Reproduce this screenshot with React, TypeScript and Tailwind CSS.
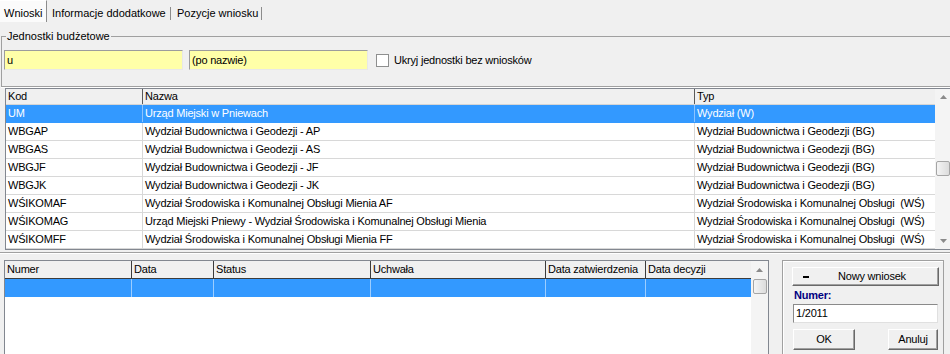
import React from "react";

const topRows: [string, string, string][] = [
  ["UM", "Urząd Miejski w Pniewach", "Wydział (W)"],
  ["WBGAP", "Wydział Budownictwa i Geodezji - AP", "Wydział Budownictwa i Geodezji (BG)"],
  ["WBGAS", "Wydział Budownictwa i Geodezji - AS", "Wydział Budownictwa i Geodezji (BG)"],
  ["WBGJF", "Wydział Budownictwa i Geodezji - JF", "Wydział Budownictwa i Geodezji (BG)"],
  ["WBGJK", "Wydział Budownictwa i Geodezji - JK", "Wydział Budownictwa i Geodezji (BG)"],
  ["WŚIKOMAF", "Wydział Środowiska i Komunalnej Obsługi Mienia AF", "Wydział Środowiska i Komunalnej Obsługi  (WŚ)"],
  ["WŚIKOMAG", "Urząd Miejski Pniewy - Wydział Środowiska i Komunalnej Obsługi Mienia", "Wydział Środowiska i Komunalnej Obsługi  (WŚ)"],
  ["WŚIKOMFF", "Wydział Środowiska i Komunalnej Obsługi Mienia FF", "Wydział Środowiska i Komunalnej Obsługi  (WŚ)"],
];

const topCols = ["w-[137px]", "w-[552px]", "w-[240px]"];
const bottomCols = [
  ["Numer", "w-[127px]"],
  ["Data", "w-[82px]"],
  ["Status", "w-[157px]"],
  ["Uchwała", "w-[175px]"],
  ["Data zatwierdzenia", "w-[100px]"],
  ["Data decyzji", "w-[105px]"],
];

function Arrow({ down }: { down?: boolean }) {
  return (
    <svg width="7" height="4" viewBox="0 0 7 4">
      {down ? (
        <path d="M0 0 H7 L3.5 4 Z" fill="#8a8a8a" />
      ) : (
        <path d="M0 4 H7 L3.5 0 Z" fill="#8a8a8a" />
      )}
    </svg>
  );
}

function Thumb({ w }: { w: string }) {
  return (
    <div
      className={`${w} h-[15px] rounded-[2px] border border-[#a5a5a5] bg-gradient-to-r from-[#f4f4f4] to-[#dcdcdc]`}
    />
  );
}

const btn =
  "bg-[#f0f0f0] border-t border-l border-white border-b border-r border-b-[#696969] border-r-[#696969] shadow-[inset_-1px_-1px_0_#a0a0a0] flex items-center";

export default function App() {
  return (
    <div className="w-[950px] h-[354px] overflow-hidden bg-[#f0f0f0] text-black text-[11px] leading-[13px] tracking-[-0.2px] font-['Liberation_Sans',Arial,sans-serif] flex flex-col">
      {/* Tabs */}
      <div className="h-[22px] shrink-0 flex items-stretch tracking-normal">
        <div className="w-[47px] pl-[4px] pt-[6px] bg-[#fbfbfb] border-r border-r-[#8c8c8c] border-t border-t-white">
          Wnioski
        </div>
        <div className="w-[124px] pl-[5px] pt-[7px] flex">
          <span className="flex-1">Informacje ddodatkowe</span>
          <span className="w-[1px] h-[13px] bg-[#8c8c8c]" />
        </div>
        <div className="w-[91px] pl-[6px] pt-[7px] flex">
          <span className="flex-1">Pozycje wniosku</span>
          <span className="w-[1px] h-[13px] bg-[#8c8c8c]" />
        </div>
      </div>

      {/* Group box */}
      <fieldset className="mt-[8px] ml-[1px] w-[990px] shrink-0 border-t border-l border-b border-[#a0a0a0] px-[2px] pb-[16px] shadow-[0_1px_0_#ffffff]">
        <legend className="ml-[2px] px-[1px] leading-[13px] tracking-normal">Jednostki budżetowe</legend>
        <div className="mt-[7px] flex items-center">
          <div className="w-[179px] h-[20px] bg-[#ffffa8] border-t border-l border-[#9c9c9c] border-b border-r border-b-[#e8e8e8] border-r-[#e8e8e8] pl-[2px] flex items-center">
            u
          </div>
          <div className="ml-[6px] w-[179px] h-[20px] bg-[#ffffa8] border-t border-l border-[#9c9c9c] border-b border-r border-b-[#e8e8e8] border-r-[#e8e8e8] pl-[2px] flex items-center">
            (po nazwie)
          </div>
          <div className="ml-[8px] w-[13px] h-[13px] bg-white border border-[#8e8f8f]" />
          <span className="ml-[5px]">Ukryj jednostki bez wniosków</span>
        </div>
      </fieldset>

      {/* Top grid */}
      <div className="mt-[1px] ml-[5px] w-[960px] h-[162px] shrink-0 border border-[#828790] bg-white flex">
        <div className="w-[929px] flex flex-col">
          <div className="h-[16px] flex bg-[#f0f0f0] border-b border-[#d5d5d5]">
            {["Kod", "Nazwa", "Typ"].map((h, i) => (
              <div
                key={h}
                className={`${topCols[i]} pl-[2px] flex items-center ${i < 2 ? "border-r border-[#5a5a5a]" : ""}`}
              >
                {h}
              </div>
            ))}
          </div>
          {topRows.map((r, ri) => {
            const sel = ri === 0;
            return (
              <div
                key={r[0]}
                className={`h-[18px] flex border-b ${sel ? "bg-[#3399ff] text-white border-[#3399ff]" : "border-[#d8d8d8]"}`}
              >
                {r.map((c, ci) => (
                  <div
                    key={ci}
                    className={`${topCols[ci]} pl-[2px] flex items-center whitespace-pre overflow-hidden ${ci < 2 ? (sel ? "border-r border-[#8cc4ff]" : "border-r border-[#d8d8d8]") : ""}`}
                  >
                    {c}
                  </div>
                ))}
              </div>
            );
          })}
        </div>
        <div className="w-[16px] bg-[#f4f4f4] flex flex-col items-center">
          <div className="h-[15px] flex items-center">
            <Arrow />
          </div>
          <div className="mt-[57px]">
            <Thumb w="w-[14px]" />
          </div>
          <div className="flex-1" />
          <div className="h-[16px] flex items-center">
            <Arrow down />
          </div>
        </div>
      </div>

      {/* Splitter */}
      <div className="mt-[2px] h-[1px] shrink-0 bg-[#a0a0a0] shadow-[0_1px_0_#ffffff]" />

      {/* Bottom section */}
      <div className="mt-[7px] flex items-start">
        <div className="ml-[4px] w-[765px] h-[110px] border border-[#828790] bg-white flex">
          <div className="w-[746px] flex flex-col">
            <div className="h-[18px] flex bg-[#f0f0f0] border-b border-[#3c3c3c]">
              {bottomCols.map(([h, w], i) => (
                <div
                  key={h}
                  className={`${w} pl-[2px] flex items-center ${i < bottomCols.length - 1 ? "border-r border-[#3c3c3c]" : ""}`}
                >
                  {h}
                </div>
              ))}
            </div>
            <div className="h-[18px] flex bg-[#3399ff]">
              {bottomCols.map(([h, w], i) => (
                <div
                  key={h}
                  className={`${w} ${i < bottomCols.length - 1 ? "border-r border-[#9ccdff]" : ""}`}
                />
              ))}
            </div>
          </div>
          <div className="w-[17px] bg-[#f4f4f4] flex flex-col items-center">
            <div className="h-[18px] flex items-center">
              <Arrow />
            </div>
            <Thumb w="w-[14px]" />
          </div>
        </div>

        {/* Right panel */}
        <div className="ml-[13px] w-[162px] h-[110px] border-t border-l border-r border-[#a0a0a0] shadow-[inset_1px_1px_0_#ffffff] pl-[9px] pt-[6px]">
          <div className={`w-[147px] h-[19px] ${btn}`}>
            <span className="ml-[10px] w-[6px] h-[2px] bg-black" />
            <span className="ml-[29px]">Nowy wniosek</span>
          </div>
          <div className="mt-[3px] ml-[2px] font-bold text-[#000080] leading-[13px]">Numer:</div>
          <div className="mt-[2px] ml-[1px] w-[145px] h-[19px] bg-white border-t border-l border-[#8a8a8a] border-b border-r border-b-[#e0e0e0] border-r-[#e0e0e0] pl-[2px] flex items-center">
            1/2011
          </div>
          <div className="mt-[6px] ml-[1px] w-[145px] flex justify-between">
            <div className={`w-[62px] h-[21px] justify-center ${btn}`}>OK</div>
            <div className={`w-[50px] h-[21px] justify-center ${btn}`}>Anuluj</div>
          </div>
        </div>
      </div>
    </div>
  );
}
